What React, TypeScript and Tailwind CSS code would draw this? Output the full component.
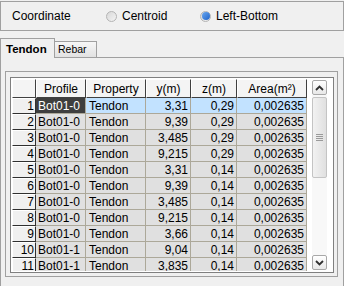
import React from "react";

const rows = [
  { n: 1, p: "Bot01-0", y: "3,31", z: "0,29" },
  { n: 2, p: "Bot01-0", y: "9,39", z: "0,29" },
  { n: 3, p: "Bot01-0", y: "3,485", z: "0,29" },
  { n: 4, p: "Bot01-0", y: "9,215", z: "0,29" },
  { n: 5, p: "Bot01-0", y: "3,31", z: "0,14" },
  { n: 6, p: "Bot01-0", y: "9,39", z: "0,14" },
  { n: 7, p: "Bot01-0", y: "3,485", z: "0,14" },
  { n: 8, p: "Bot01-0", y: "9,215", z: "0,14" },
  { n: 9, p: "Bot01-0", y: "3,66", z: "0,14" },
  { n: 10, p: "Bot01-1", y: "9,04", z: "0,14" },
  { n: 11, p: "Bot01-1", y: "3,835", z: "0,14" },
];

const cols = "grid grid-cols-[24px_50px_60px_45px_46px_70px]";
const hdr =
  "h-[19px] bg-[#f4f4f4] border-t border-l border-r border-b border-t-white border-l-white border-r-[#404040] border-b-[#404040] flex items-center justify-center";
const rowHdr =
  "h-[16px] bg-[#f0f0f0] border-t border-l border-r border-b border-t-white border-l-white border-r-[#303030] border-b-[#303030] flex items-center justify-end pr-[1px]";
const cell = "h-[16px] border-r border-b border-[#aca899] flex items-center whitespace-nowrap overflow-hidden";

function Radio({ on }: { on?: boolean }) {
  return (
    <span className="w-[11px] h-[11px] rounded-full border border-[#b4b4b4] bg-gradient-to-br from-[#d8d8d8] to-[#f4f4f4] flex items-center justify-center">
      {on && <span className="w-[8px] h-[8px] rounded-full bg-gradient-to-br from-[#6aa8f0] to-[#1e62c8]" />}
    </span>
  );
}

function Chevron({ up }: { up?: boolean }) {
  return (
    <svg width="9" height="6" viewBox="0 0 9 6">
      <polyline
        points={up ? "1,5 4.5,1.5 8,5" : "1,1 4.5,4.5 8,1"}
        fill="none"
        stroke="#303030"
        strokeWidth="1.8"
      />
    </svg>
  );
}

export default function App() {
  return (
    <div
      className="w-[344px] h-[286px] bg-[#f0f0f0] overflow-hidden text-[12px] text-black"
      style={{ fontFamily: '"Liberation Sans", Arial, sans-serif' }}
    >
      {/* Coordinate box */}
      <div className="mt-[1px] h-[30px] border border-[#a0a0a0] flex items-center">
        <span className="ml-[11px] w-[94px]">Coordinate</span>
        <span className="flex items-center gap-[5px] w-[95px]">
          <Radio />
          Centroid
        </span>
        <span className="flex items-center gap-[5px] -ml-[1px]">
          <Radio on />
          Left-Bottom
        </span>
      </div>

      {/* Tabs */}
      <div className="mt-[7px] flex items-end h-[20px] relative z-10">
        <div className="w-[55px] h-[20px] border-t border-l border-r border-[#a0a0a0] bg-[#f0f0f0] font-bold text-[11.5px] pl-[5px] flex items-center pt-[2px]">
          Tendon
        </div>
        <div className="w-[42px] h-[17px] border-t border-r border-b border-[#a0a0a0] bg-gradient-to-b from-[#f6f6f6] to-[#e2e2e2] text-[10.5px] pl-[3px] flex items-center">
          Rebar
        </div>
      </div>

      {/* Panel */}
      <div className="-mt-[1px] h-[230px] border border-[#a0a0a0] pl-[4px] pr-[5px] pt-[13px]">
        <div className="h-[206px] border border-[#a0a0a0] pl-[4px] pr-[3px] pt-[5px] pb-[4px]">
          <div className="h-[196px] border border-[#808080] bg-white p-[1px] flex overflow-hidden">
            <div className="w-[295px] overflow-hidden">
              <div className={cols}>
                <div className={hdr} />
                <div className={hdr}>Profile</div>
                <div className={hdr}>Property</div>
                <div className={hdr}>y(m)</div>
                <div className={hdr}>z(m)</div>
                <div className={hdr}>Area(m²)</div>
              </div>
              {rows.map((r) => {
                const sel = r.n === 1;
                const bg = sel ? "bg-[#c2e2ff]" : "bg-[#e0e0e0]";
                return (
                  <div key={r.n} className={cols}>
                    <div className={rowHdr}>{r.n}</div>
                    <div className={`${cell} pl-[2px] ${sel ? "bg-[#3e3e3e] text-white" : "bg-[#e0e0e0]"}`}>{r.p}</div>
                    <div className={`${cell} ${bg} pl-[3px]`}>Tendon</div>
                    <div className={`${cell} ${bg} justify-end pr-[2px]`}>{r.y}</div>
                    <div className={`${cell} ${bg} justify-end pr-[2px]`}>{r.z}</div>
                    <div className={`${cell} ${bg} justify-end pr-[2px]`}>0,002635</div>
                  </div>
                );
              })}
            </div>

            {/* Scrollbar */}
            <div className="ml-[5px] w-[15px] mt-[1px] mb-[1px] flex flex-col">
              <div className="h-[15px] border border-[#a8a8a8] rounded-[2px] bg-gradient-to-b from-white to-[#e8e8e8] flex items-center justify-center">
                <Chevron up />
              </div>
              <div className="flex-1 bg-[#f8f8f8] flex flex-col pt-[2px]">
                <div className="h-[81px] border border-[#c4c4c4] rounded-[2px] bg-gradient-to-r from-[#f2f2f2] to-[#e0e0e0] flex flex-col items-center justify-center gap-[1px]">
                  <span className="w-[7px] h-[1px] bg-[#9a9a9a]" />
                  <span className="w-[7px] h-[1px] bg-[#9a9a9a]" />
                  <span className="w-[7px] h-[1px] bg-[#9a9a9a]" />
                  <span className="w-[7px] h-[1px] bg-[#9a9a9a]" />
                </div>
              </div>
              <div className="h-[15px] border border-[#a8a8a8] rounded-[2px] bg-gradient-to-b from-white to-[#e8e8e8] flex items-center justify-center">
                <Chevron />
              </div>
            </div>
          </div>
        </div>
      </div>
    </div>
  );
}
